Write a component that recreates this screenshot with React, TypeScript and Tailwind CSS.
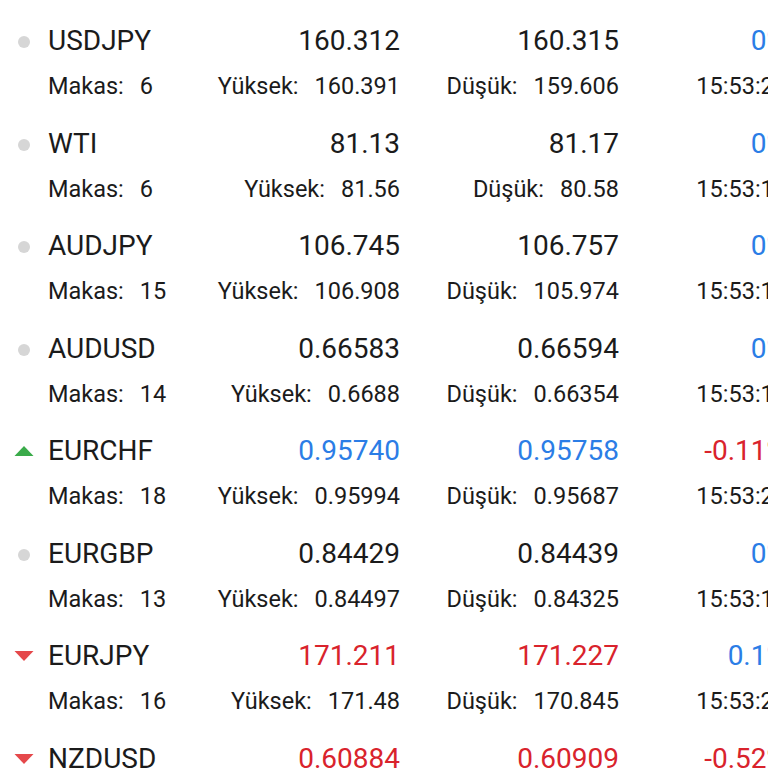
import React from "react";

type Dir = "flat" | "up" | "down";

interface Quote {
  symbol: string;
  dir: Dir;
  bid: string;
  ask: string;
  change: string;
  spread: string;
  high: string;
  low: string;
  time: string;
}

const quotes: Quote[] = [
  { symbol: "USDJPY", dir: "flat", bid: "160.312", ask: "160.315", change: "0%", spread: "6", high: "160.391", low: "159.606", time: "15:53:22" },
  { symbol: "WTI", dir: "flat", bid: "81.13", ask: "81.17", change: "0%", spread: "6", high: "81.56", low: "80.58", time: "15:53:18" },
  { symbol: "AUDJPY", dir: "flat", bid: "106.745", ask: "106.757", change: "0%", spread: "15", high: "106.908", low: "105.974", time: "15:53:19" },
  { symbol: "AUDUSD", dir: "flat", bid: "0.66583", ask: "0.66594", change: "0%", spread: "14", high: "0.6688", low: "0.66354", time: "15:53:17" },
  { symbol: "EURCHF", dir: "up", bid: "0.95740", ask: "0.95758", change: "-0.11%", spread: "18", high: "0.95994", low: "0.95687", time: "15:53:21" },
  { symbol: "EURGBP", dir: "flat", bid: "0.84429", ask: "0.84439", change: "0%", spread: "13", high: "0.84497", low: "0.84325", time: "15:53:16" },
  { symbol: "EURJPY", dir: "down", bid: "171.211", ask: "171.227", change: "0.1%", spread: "16", high: "171.48", low: "170.845", time: "15:53:22" },
  { symbol: "NZDUSD", dir: "down", bid: "0.60884", ask: "0.60909", change: "-0.52%", spread: "11", high: "0.60957", low: "0.60712", time: "15:53:20" },
];

function DirIcon({ dir }: { dir: Dir }) {
  if (dir === "up") {
    return (
      <svg width="20" height="10" viewBox="0 0 20 10">
        <polygon points="10,0 19.5,10 0.5,10" fill="#3aab4a" />
      </svg>
    );
  }
  if (dir === "down") {
    return (
      <svg width="20" height="10" viewBox="0 0 20 10">
        <polygon points="0.5,0 19.5,0 10,10" fill="#e5484b" />
      </svg>
    );
  }
  return <div className="w-[12px] h-[12px] rounded-full bg-[#d6d6d6] mt-[2px]" />;
}

function QuoteRow({ q }: { q: Quote }) {
  const priceColor =
    q.dir === "up" ? "text-[#2b7de6]" : q.dir === "down" ? "text-[#d9232c]" : "text-[#1b1b1b]";
  const changeColor = q.change.startsWith("-") ? "text-[#d9232c]" : "text-[#2b7de6]";

  return (
    <div className="h-[102.57px] shrink-0">
      {/* main line */}
      <div className="flex h-[36px] items-center text-[28px] leading-[36px]">
        <div className="w-[48px] flex justify-center items-center">
          <DirIcon dir={q.dir} />
        </div>
        <div className="w-[352px] flex justify-between">
          <span className="text-[#1b1b1b]">{q.symbol}</span>
          <span className={priceColor}>{q.bid}</span>
        </div>
        <div className={`w-[219px] text-right ${priceColor}`}>{q.ask}</div>
        <div className={`w-[168px] text-right ${changeColor}`}>{q.change}</div>
      </div>

      {/* details line */}
      <div className="flex h-[30px] mt-[12px] items-center text-[23.5px] leading-[30px] text-[#1b1b1b]">
        <div className="w-[48px]" />
        <div className="w-[352px] flex justify-between">
          <span>
            Makas:<span className="ml-[16px]">{q.spread}</span>
          </span>
          <span>
            Yüksek:<span className="ml-[16px]">{q.high}</span>
          </span>
        </div>
        <div className="w-[219px] text-right">
          Düşük:<span className="ml-[16px]">{q.low}</span>
        </div>
        <div className="w-[168px] text-right">{q.time}</div>
      </div>
    </div>
  );
}

export default function App() {
  return (
    <div className="w-[768px] h-[768px] overflow-hidden bg-white font-['Roboto',sans-serif]">
      <div className="w-[800px] pt-[23px] flex flex-col">
        {quotes.map((q) => (
          <QuoteRow key={q.symbol} q={q} />
        ))}
      </div>
    </div>
  );
}
